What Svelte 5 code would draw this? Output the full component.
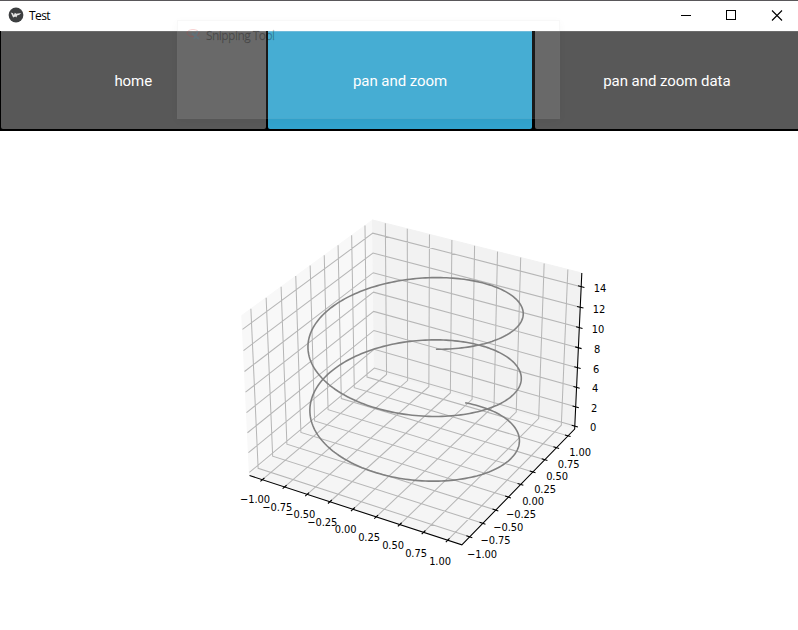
<script>
  // Camera: elevation 30°, azimuth -60°, perspective distance 10.
  const LX = 1.14583, Z0 = -0.3125, Z1 = 15.3125;
  const A = 0.5953, C = 0.4465, S = 2043, CX = 415.1, CY = 374.6 - 131;
  function project(x, y, z) {
    const a = (x / LX) * A, b = (y / LX) * A, c = ((z - 7.5) / 7.8125) * C;
    const u = 0.866 * a + 0.5 * b;
    const v = -0.25 * a + 0.433 * b + 0.866 * c;
    const d = 10 - (0.433 * a - 0.75 * b + 0.5 * c);
    return [CX + (S * u) / d, CY - (S * v) / d];
  }
  const path = (...pts) => 'M' + pts.map((p) => project(...p).map((n) => n.toFixed(2)).join(',')).join('L');

  const ticks = [-1, -0.75, -0.5, -0.25, 0, 0.25, 0.5, 0.75, 1];
  const zticks = [0, 2, 4, 6, 8, 10, 12, 14];
  const T = 0.034;

  const panes = [
    { c: '#f8f8f8', d: path([-LX, -LX, Z0], [-LX, LX, Z0], [-LX, LX, Z1], [-LX, -LX, Z1]) + 'Z' },
    { c: '#f2f2f2', d: path([-LX, LX, Z0], [LX, LX, Z0], [LX, LX, Z1], [-LX, LX, Z1]) + 'Z' },
    { c: '#f5f5f5', d: path([-LX, -LX, Z0], [LX, -LX, Z0], [LX, LX, Z0], [-LX, LX, Z0]) + 'Z' }
  ];
  const grid = [
    ...ticks.map((t) => path([t, -LX, Z0], [t, LX, Z0], [t, LX, Z1])),
    ...ticks.map((t) => path([LX, t, Z0], [-LX, t, Z0], [-LX, t, Z1])),
    ...zticks.map((t) => path([-LX, -LX, t], [-LX, LX, t], [LX, LX, t]))
  ].join('');
  const axes = path([-LX, -LX, Z0], [LX, -LX, Z0], [LX, LX, Z0], [LX, LX, Z1]);
  const marks = [
    ...ticks.map((t) => path([t, -LX - T, Z0], [t, -LX + T, Z0])),
    ...ticks.map((t) => path([LX - T, t, Z0], [LX + T * 0.8, t, Z0])),
    ...zticks.map((t) => path([LX - T, LX, t], [LX + T, LX, t]))
  ].join('');
  const helix = path(...Array.from({ length: 500 }, (_, i) => {
    const t = (15 * i) / 499;
    return [Math.sin(t), Math.cos(t), t];
  }));

  const fmt = (t) => (t < 0 ? '−' : '') + Math.abs(t).toFixed(2);
  const xPos = [[255, 499], [277.3, 507], [300.3, 514], [322.3, 522], [345.7, 529], [369, 537], [393, 545], [416, 553], [440, 561]];
  const yPos = [[482, 554], [495.5, 540], [508.3, 527], [521, 514], [533, 501], [545, 489], [557, 476], [568.7, 464], [580, 452]];
  const zPos = [[593, 427], [594, 408], [595, 388], [596, 369], [597, 349], [598, 329], [599, 309], [600, 288]];
  const labels = [
    ...ticks.map((t, i) => ({ s: fmt(t), p: xPos[i] })),
    ...ticks.map((t, i) => ({ s: fmt(t), p: yPos[i] })),
    ...zticks.map((t, i) => ({ s: String(t), p: zPos[i] }))
  ];
</script>

<div class="window">
  <header>
    <svg class="logo" width="16" height="16" viewBox="0 0 16 16">
      <circle cx="8" cy="8" r="7.4" fill="#3d3f41" />
      <path d="M2.8 5.6L5 6.2 5.9 8.2 6.8 5.7 8.4 6.8 13.2 6 11.1 7.9 9.4 8.2 8.3 10.4 7.3 9.5 5.1 10.5Z" fill="#e4e4e4" />
    </svg>
    <span class="title">Test</span>
    <svg class="controls" width="138" height="30" viewBox="0 0 138 30" fill="none" stroke="#000" shape-rendering="crispEdges">
      <path d="M21 14.5H31M66.5 9.5H75.5V18.5H66.5Z" />
      <path d="M112 9.5L122 19.5M122 9.5L112 19.5" shape-rendering="auto" stroke-width="1.1" />
    </svg>
  </header>
  <nav>
    <button>home</button>
    <button class="active">pan and zoom</button>
    <button>pan and zoom data</button>
  </nav>
  <main>
    <svg width="798" height="499" viewBox="0 0 798 499" fill="none">
      {#each panes as p}<path d={p.d} fill={p.c} stroke={p.c} />{/each}
      <path d={grid} stroke="#b6b6b6" stroke-width="1.03" />
      <path d={axes} stroke="#000" stroke-width="1.07" />
      <path d={marks} stroke="#000" stroke-width="1.07" />
      <path d={helix} stroke="#808080" stroke-width="1.6" />
      {#each labels as l}<text x={l.p[0]} y={l.p[1] - 131 + 4}>{l.s}</text>{/each}
    </svg>
  </main>
  <div class="ghost">
    <svg width="16" height="14" viewBox="0 0 16 14" fill="none">
      <ellipse cx="7" cy="5" rx="6" ry="3.5" stroke="#d33" />
      <path d="M6 5L13 11M12 3L8 11" stroke="#48a" stroke-width="2" />
    </svg>
    <span>Snipping Tool</span>
  </div>
</div>

<style>
  :global(body) { margin: 0; background: #fff; }
  .window {
    position: relative;
    width: 798px;
    height: 630px;
    overflow: hidden;
    display: flex;
    flex-direction: column;
    background: #fff;
  }
  header {
    height: 30px;
    border-top: 1px solid #59575a;
    display: flex;
    align-items: center;
    padding-left: 8px;
  }
  .logo { margin-top: -2px; }
  .title {
    margin-left: 5px;
    font: 12px/16px "Open Sans", "Noto Sans", sans-serif;
    letter-spacing: -0.6px;
    color: #000;
  }
  .controls { margin-left: auto; }
  nav {
    height: 98px;
    display: grid;
    grid-template-columns: 264.5px 264.5px 264.5px;
    column-gap: 2.3px;
    padding: 0 0 2px 1px;
    background: #000;
  }
  button {
    border: 0;
    border-top: 1px solid #6c6c6c;
    border-radius: 0 0 2px 2px;
    padding: 0;
    background: #585858;
    color: #fff;
    font: 15px Roboto, sans-serif;
    letter-spacing: -0.05px;
  }
  .active { background: #32a4ce; border-top-color: #60b4d6; }
  main { height: 499px; }
  main svg { display: block; }
  text {
    font: 11px "DejaVu Sans Condensed", "DejaVu Sans", sans-serif;
    font-stretch: condensed;
    letter-spacing: -0.08px;
    fill: #000;
    text-anchor: middle;
  }
  .ghost {
    position: absolute;
    left: 177px;
    top: 20px;
    width: 383px;
    height: 99px;
    box-sizing: border-box;
    padding: 7px 8px;
    display: flex;
    gap: 4px;
    align-items: flex-start;
    background: rgba(255, 255, 255, 0.1);
    border: 1px solid rgba(128, 128, 128, 0.06);
    box-shadow: 0 2px 9px rgba(0, 0, 0, 0.03);
  }
  .ghost svg { opacity: 0.22; }
  .ghost span {
    font: 12px/16px "Open Sans", sans-serif;
    letter-spacing: -0.55px;
    color: rgba(0, 0, 0, 0.26);
    -webkit-text-stroke: 0.3px rgba(0, 0, 0, 0.2);
  }
</style>
